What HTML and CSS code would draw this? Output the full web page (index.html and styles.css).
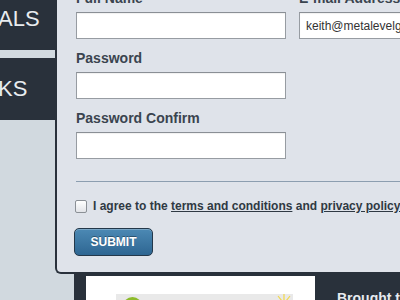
FILE: index.html
```html
<!DOCTYPE html>
<html>
<head>
<meta charset="utf-8">
<link rel="stylesheet" href="styles.css">
</head>
<body>
<div class="page">
  <div class="top">
    <nav class="sidebar">
      <a class="nav-item">ALS</a>
      <a class="nav-item">KS</a>
    </nav>
    <section class="panel">
      <form class="form">
        <div class="field">
          <label class="label">Full Name</label>
          <input class="input" type="text" value="">
        </div>
        <div class="field">
          <label class="label">E-mail Address</label>
          <input class="input input-email" type="text" value="keith@metalevelgroup.com">
        </div>
        <div class="field">
          <label class="label">Password</label>
          <input class="input" type="password" value="">
        </div>
        <div class="field field-empty"></div>
        <div class="field">
          <label class="label">Password Confirm</label>
          <input class="input" type="password" value="">
        </div>
      </form>
      <hr class="divider">
      <div class="agree">
        <input class="check" type="checkbox">
        <span class="agree-text">I agree to the <a class="link">terms and conditions</a> and <a class="link">privacy policy</a></span>
      </div>
      <button class="submit" type="button">SUBMIT</button>
    </section>
  </div>
  <div class="bottom">
    <div class="card">
      <div class="card-image">
        <span class="green-dot"></span>
        <svg class="sun" width="16" height="10" viewBox="0 0 16 10"><g stroke="#f2d84a" stroke-width="1.2" fill="none"><line x1="8" y1="0" x2="8" y2="6"/><line x1="2" y1="2" x2="6" y2="7"/><line x1="14" y1="2" x2="10" y2="7"/></g><circle cx="8" cy="10" r="4" fill="#f7e98a"/></svg>
      </div>
    </div>
    <p class="brought">Brought to you by</p>
  </div>
</div>
</body>
</html>
```
FILE: styles.css
```css
html, body {
  margin: 0;
  padding: 0;
}
body {
  width: 400px;
  height: 300px;
  overflow: hidden;
  font-family: "Liberation Sans", Arial, sans-serif;
}
.page {
  width: 400px;
  height: 300px;
  overflow: hidden;
  background: #d1d9df;
}
.top {
  display: flex;
  height: 274px;
}
.sidebar {
  width: 55px;
  flex-shrink: 0;
  display: flex;
  flex-direction: column;
  gap: 8px;
  margin-top: -12px;
  overflow: hidden;
}
.nav-item {
  display: flex;
  align-items: center;
  height: 62px;
  background: #29313b;
  color: #e8ecef;
  font-size: 22px;
  margin-left: -2px;
  padding-left: 0;
  white-space: nowrap;
}
.panel {
  width: 430px;
  flex-shrink: 0;
  box-sizing: border-box;
  height: 274px;
  background: #dfe3ea;
  border-left: 2px solid #29313b;
  border-bottom: 2px solid #29313b;
  border-bottom-left-radius: 6px;
  overflow: hidden;
  padding-left: 19px;
}
.form {
  display: grid;
  grid-template-columns: 210px 210px;
  column-gap: 13px;
  margin: -11px 0 0 0;
}
.field {
  display: flex;
  flex-direction: column;
  margin-bottom: 10px;
}
.label {
  font-size: 14px;
  font-weight: bold;
  line-height: 18px;
  color: #3a444f;
  margin-bottom: 5px;
  white-space: nowrap;
}
.input {
  box-sizing: border-box;
  height: 27px;
  width: 210px;
  margin: 0;
  border: 1px solid #979ca2;
  border-top-color: #8a8f95;
  background: #fff;
  box-shadow: inset 0 1px 1px rgba(0,0,0,0.06);
  font-family: "Liberation Sans", Arial, sans-serif;
  font-size: 12px;
  color: #333;
  padding: 0 3px;
  outline: none;
}
.input-email {
  padding-left: 6px;
}
.divider {
  border: 0;
  border-top: 1px solid #8c9eb0;
  margin: 12px 0 0 0;
  height: 0;
}
.agree {
  display: flex;
  align-items: center;
  margin-top: 17px;
  height: 14px;
  margin-left: -1px;
}
.check {
  appearance: none;
  -webkit-appearance: none;
  box-sizing: border-box;
  width: 12px;
  height: 13px;
  margin: 0 6px 0 0;
  border: 1px solid #8b9096;
  border-radius: 2px;
  background: linear-gradient(#ffffff, #e2e4e8);
}
.agree-text {
  font-size: 12px;
  font-weight: bold;
  line-height: 14px;
  color: #2f3943;
  white-space: nowrap;
}
.link {
  color: #2f3943;
  text-decoration: underline;
}
.submit {
  display: block;
  box-sizing: border-box;
  width: 79px;
  height: 28px;
  margin: 15px 0 0 -2px;
  padding: 0;
  border: 1px solid #24384a;
  border-radius: 5px;
  background: linear-gradient(#4c89b4, #2e6692);
  box-shadow: inset 0 1px 0 rgba(255,255,255,0.25);
  color: #ffffff;
  font-family: "Liberation Sans", Arial, sans-serif;
  font-size: 12px;
  font-weight: bold;
  text-shadow: 0 -1px 0 rgba(0,0,0,0.35);
}
.bottom {
  display: flex;
  align-items: flex-start;
  gap: 22px;
  margin-left: 74px;
  height: 26px;
  background: #29313b;
  padding: 2px 0 0 12px;
  box-sizing: border-box;
}
.card {
  width: 229px;
  height: 30px;
  flex-shrink: 0;
  background: #ffffff;
  padding: 18px 0 0 30px;
  box-sizing: border-box;
}
.card-image {
  position: relative;
  width: 177px;
  height: 20px;
  background: #e9e9e9;
}
.green-dot {
  position: absolute;
  left: 7px;
  top: 3px;
  width: 19px;
  height: 19px;
  border-radius: 50%;
  background: #8dbb2a;
}
.sun {
  position: absolute;
  left: 160px;
  top: 0;
}
.brought {
  margin: 0;
  margin-top: 13px;
  color: #e6eaee;
  font-size: 14px;
  font-weight: bold;
  line-height: 18px;
  white-space: nowrap;
}
```
